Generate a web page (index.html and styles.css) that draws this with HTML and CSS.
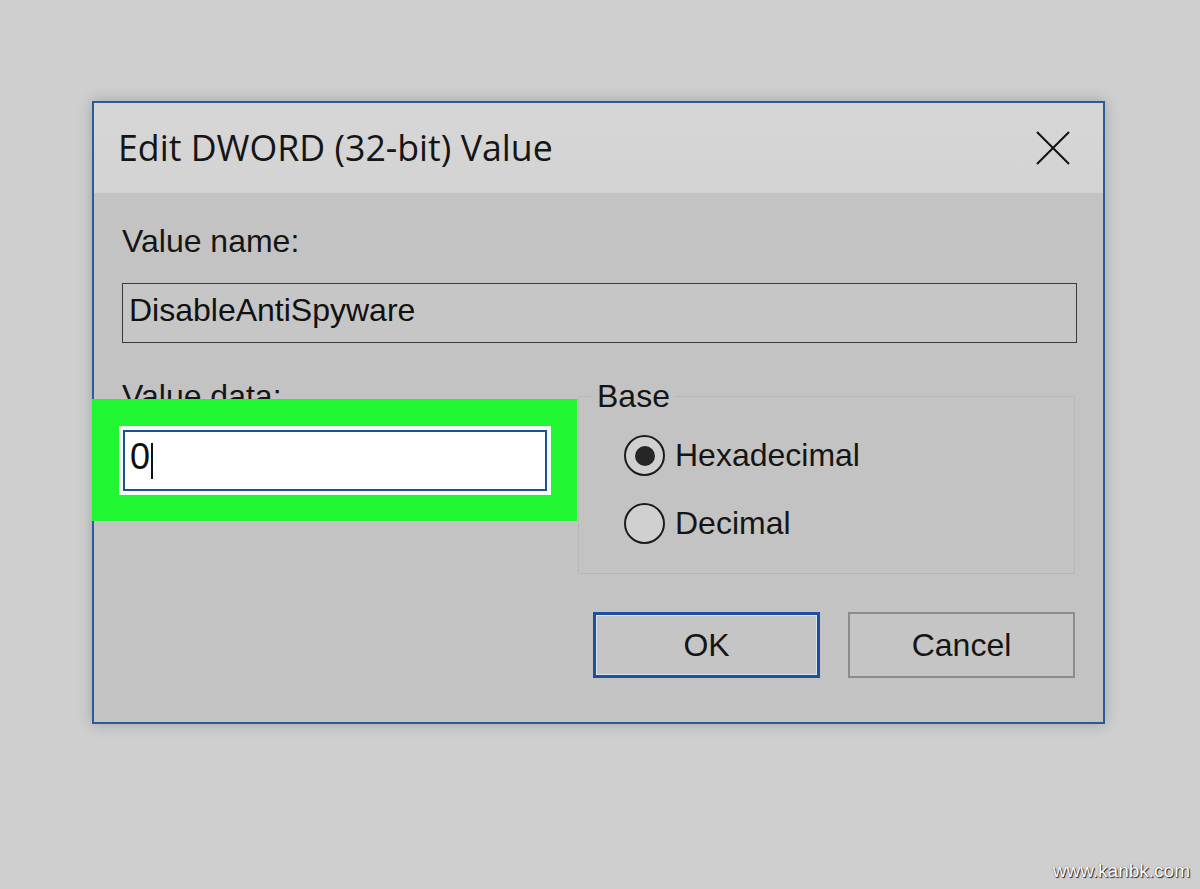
FILE: index.html
```html
<!DOCTYPE html>
<html lang="en">
<head>
    <meta charset="UTF-8">
    <meta name="viewport" content="width=device-width, initial-scale=1.0">
    <title>Edit DWORD (32-bit) Value</title>
    <link rel="stylesheet" href="styles.css">
</head>
<body>
    <div class="dialog">
        <div class="titlebar">
            <span class="title">Edit DWORD (32-bit) Value</span>
            <svg class="close-icon" width="34" height="34" viewBox="0 0 34 34">
                <path d="M1 1 L33 33 M33 1 L1 33" stroke="#111" stroke-width="2" fill="none"/>
            </svg>
        </div>

        <div class="dialog-body">
            <div class="label">Value name:</div>
            <div class="name-field">DisableAntiSpyware</div>

            <div class="data-row">
                <div class="data-col">
                    <div class="label">Value data:</div>
                    <!-- highlighted input -->
                    <div class="highlight">
                        <div class="data-input"><span>0</span><span class="caret"></span></div>
                    </div>
                </div>

                <fieldset class="base-group">
                    <legend>Base</legend>
                    <div class="radio-row">
                        <span class="radio checked"></span>
                        <span class="radio-label">Hexadecimal</span>
                    </div>
                    <div class="radio-row">
                        <span class="radio"></span>
                        <span class="radio-label">Decimal</span>
                    </div>
                </fieldset>
            </div>

            <div class="buttons">
                <button class="dlg-btn default">OK</button>
                <button class="dlg-btn">Cancel</button>
            </div>
        </div>
    </div>

    <div class="watermark">www.kanbk.com</div>
</body>
</html>
```

FILE: styles.css
```css
* {
    margin: 0;
    padding: 0;
    box-sizing: border-box;
}

html, body {
    width: 1200px;
    height: 889px;
    overflow: hidden;
}

body {
    font-family: "Liberation Sans", Arial, sans-serif;
    background-color: #cfcfcf;
    padding: 101px 0 0 92px;
    color: #111;
    position: relative;
}

.dialog {
    width: 1013px;
    border: 2px solid #2d5a98;
    background-color: #c3c3c3;
    box-shadow: 0 0 14px rgba(0, 0, 0, 0.22);
}

.titlebar {
    height: 90px;
    background: linear-gradient(180deg, #d7d7d7 0%, #d3d3d3 100%);
    display: flex;
    align-items: center;
    justify-content: space-between;
    padding: 0 33px 0 24px;
}

.title {
    font-family: "Open Sans", "Noto Sans", sans-serif;
    font-size: 35.7px;
    color: #151515;
    margin-top: -2px;
}

.close-icon {
    margin-top: 0;
}

.dialog-body {
    padding: 30px 26px 44px 28px;
}

.label {
    font-size: 32px;
    line-height: 37px;
    color: #151515;
}

.name-field {
    margin-top: 23px;
    height: 60px;
    border: 1px solid #3a3a3a;
    background-color: #c6c6c6;
    font-size: 32px;
    padding: 0 0 6px 6px;
    display: flex;
    align-items: center;
}

.data-row {
    display: flex;
    margin-top: 35px;
}

.data-col {
    flex: 0 0 456px;
}

.highlight {
    width: 485px;
    height: 122px;
    margin: -16px 0 0 -30px;
    background-color: #20f631;
    padding: 31px 0 0 31px;
    position: relative;
}

.data-input {
    width: 424px;
    height: 61px;
    background-color: #fff;
    border: 2px solid #1f4f96;
    box-shadow: 0 0 0 4px #f2fcf2;
    font-size: 36px;
    padding: 0 0 8px 5px;
    display: flex;
    align-items: center;
}

.caret {
    display: inline-block;
    width: 2px;
    height: 36px;
    background-color: #111;
    margin: 8px 0 0 1px;
}

.base-group {
    flex: 0 0 497px;
    border: 1px solid #b7b7b7;
    padding: 20px 0 29px 45px;
}

.base-group legend {
    font-size: 32px;
    line-height: 37px;
    margin-left: -31px;
    padding: 0 4px;
    color: #151515;
}

.radio-row {
    display: flex;
    align-items: center;
    height: 41px;
}

.radio-row + .radio-row {
    margin-top: 27px;
}

.radio {
    width: 41px;
    height: 41px;
    border: 2px solid #1c1c1c;
    border-radius: 50%;
    background-color: #d0d0d0;
    display: flex;
    align-items: center;
    justify-content: center;
}

.radio.checked::after {
    content: "";
    width: 20px;
    height: 20px;
    border-radius: 50%;
    background-color: #262626;
}

.radio-label {
    font-size: 32px;
    margin-left: 10px;
    color: #151515;
}

.buttons {
    display: flex;
    justify-content: flex-end;
    gap: 28px;
    margin-top: 38px;
    padding-right: 2px;
}

.dlg-btn {
    width: 227px;
    height: 66px;
    font-family: "Liberation Sans", Arial, sans-serif;
    font-size: 32px;
    color: #151515;
    background-color: #c5c5c5;
    border: 2px solid #8c8c8c;
}

.dlg-btn.default {
    border: 3px solid #1d4f9c;
    box-shadow: inset 0 0 0 1px #dbe3ec;
}

/* site watermark */
.watermark {
    position: absolute;
    right: 10px;
    bottom: 7px;
    font-family: "Liberation Sans", Arial, sans-serif;
    font-size: 19px;
    color: #fff;
    text-shadow: 1px 1px 1px #222, 0 0 1px #444;
}
```
